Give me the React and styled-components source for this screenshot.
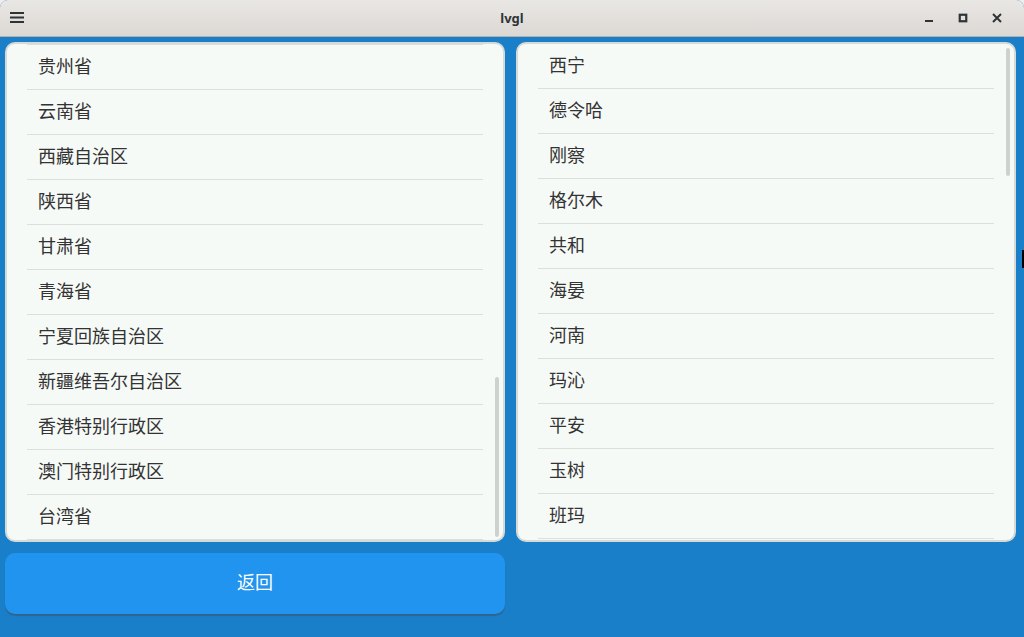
import React from "react";
import styled, { createGlobalStyle } from "styled-components";

const Global = createGlobalStyle`
  html, body { margin: 0; padding: 0; background: #f0efed; }
  body { font-family: "Noto Sans CJK SC", "Noto Sans", sans-serif; }
  * { box-sizing: border-box; }
`;

const Window = styled.div`
  width: 1024px;
  height: 637px;
  display: flex;
  flex-direction: column;
  border-radius: 8px 8px 0 0;
  overflow: hidden;
  background: #1a7fc9;
  position: relative;
`;

const TitleBar = styled.div`
  height: 37px;
  flex: none;
  display: grid;
  grid-template-columns: 1fr auto 1fr;
  align-items: center;
  background: linear-gradient(#e9e7e4, #dcd8d4);
  border-bottom: 1px solid #b9b1a9;
  padding: 0 10px 1px 10px;
`;

const Title = styled.div`
  font-family: "Noto Sans", "DejaVu Sans", sans-serif;
  font-weight: 700;
  font-size: 13px;
  color: #2e3436;
`;

const Controls = styled.div`
  display: flex;
  justify-content: flex-end;
  align-items: center;
`;

const CtrlBtn = styled.div`
  width: 34px;
  height: 24px;
  display: flex;
  align-items: center;
  justify-content: center;
`;

const Main = styled.div`
  flex: 1;
  padding: 5px;
  display: grid;
  grid-template-columns: 500px 500px;
  grid-template-rows: 500px 61px;
  column-gap: 11px;
  row-gap: 11px;
`;

const Panel = styled.div`
  position: relative;
  overflow: hidden;
  background: #f6faf7;
  border: 2px solid #d6dad7;
  border-radius: 10px;
  padding: 0 20px;
`;

const List = styled.div`
  display: flex;
  flex-direction: column;
  border-top: ${(p) => (p.$topLine ? "1px solid #dcdfdc" : "none")};
`;

const Item = styled.div`
  flex: none;
  height: 45px;
  border-bottom: 1px solid #dcdfdc;
  display: flex;
  align-items: center;
  padding: 0 0 4px 11px;
  font-size: 18px;
  color: #333333;
  line-height: 1;
`;

const ScrollBar = styled.div`
  position: absolute;
  left: 488px;
  width: 4px;
  border-radius: 2px;
  background: #cdd2cf;
`;

const BackButton = styled.button`
  border: none;
  border-radius: 10px;
  background: #2194ef;
  box-shadow: 0 2px 1px rgba(70, 80, 90, 0.55);
  color: #ffffff;
  font-family: "Noto Sans CJK SC", sans-serif;
  font-size: 18px;
  padding: 0 0 6px 0;
`;

const CursorMark = styled.div`
  position: absolute;
  left: 1022px;
  top: 250px;
  width: 3px;
  height: 18px;
  background: #000;
`;

const provinces = [
  "贵州省",
  "云南省",
  "西藏自治区",
  "陕西省",
  "甘肃省",
  "青海省",
  "宁夏回族自治区",
  "新疆维吾尔自治区",
  "香港特别行政区",
  "澳门特别行政区",
  "台湾省",
];

const cities = [
  "西宁",
  "德令哈",
  "刚察",
  "格尔木",
  "共和",
  "海晏",
  "河南",
  "玛沁",
  "平安",
  "玉树",
  "班玛",
];

export default function App() {
  return (
    <>
      <Global />
      <Window>
        <TitleBar>
          <svg width="14" height="11" viewBox="0 0 14 11">
            <rect x="0" y="0" width="14" height="2" fill="#2e3436" />
            <rect x="0" y="4.5" width="14" height="2" fill="#2e3436" />
            <rect x="0" y="9" width="14" height="2" fill="#2e3436" />
          </svg>
          <Title>lvgl</Title>
          <Controls>
            <CtrlBtn>
              <svg width="10" height="10" viewBox="0 0 10 10">
                <rect x="1" y="7" width="8" height="2" fill="#2e3436" />
              </svg>
            </CtrlBtn>
            <CtrlBtn>
              <svg width="10" height="10" viewBox="0 0 10 10">
                <rect x="1.75" y="1.75" width="6.5" height="6.5" fill="none" stroke="#2e3436" strokeWidth="2.2" />
              </svg>
            </CtrlBtn>
            <CtrlBtn>
              <svg width="10" height="10" viewBox="0 0 10 10">
                <path d="M1 1 L9 9 M9 1 L1 9" stroke="#2e3436" strokeWidth="2" />
              </svg>
            </CtrlBtn>
          </Controls>
        </TitleBar>
        <Main>
          <Panel>
            <List $topLine>
              {provinces.map((p) => (
                <Item key={p}>{p}</Item>
              ))}
            </List>
            <ScrollBar style={{ top: 333, height: 160 }} />
          </Panel>
          <Panel>
            <List>
              {cities.map((c) => (
                <Item key={c}>{c}</Item>
              ))}
            </List>
            <ScrollBar style={{ top: 4, height: 128 }} />
          </Panel>
          <BackButton>返回</BackButton>
        </Main>
        <CursorMark />
      </Window>
    </>
  );
}
